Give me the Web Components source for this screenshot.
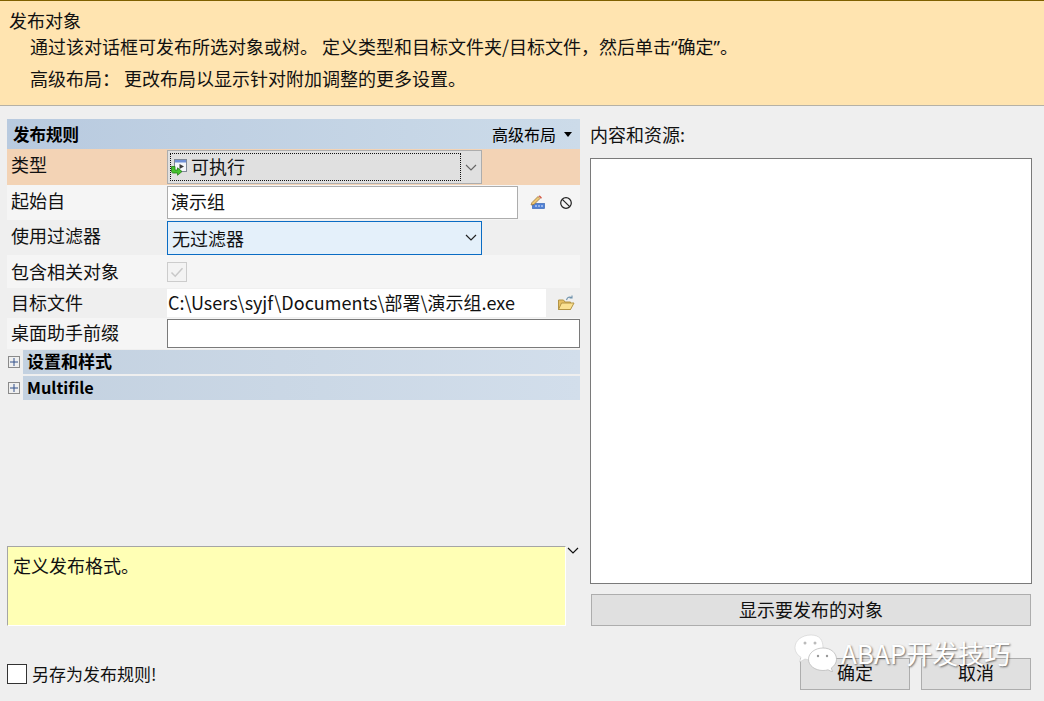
<!DOCTYPE html>
<html lang="zh">
<head>
<meta charset="utf-8">
<title>发布对象</title>
<style>
  html, body { margin: 0; height: 100%; }
  body {
    width: 1044px;
    height: 701px;
    overflow: hidden;
    position: relative;
    background: #efefef;
    color: #000;
    font-family: "Noto Sans CJK SC", "Noto Sans", sans-serif;
  }
  .page { display: grid; grid-template-columns: 573px 442px; column-gap: 10px; padding: 13px 0 0 7px; }
  .left { display: flex; flex-direction: column; height: 507px; }
  .q { font-family: "Noto Sans", sans-serif; }
</style>
</head>
<body>

<pub-banner heading="发布对象">
  <div>通过该对话框可发布所选对象或树。 定义类型和目标文件夹/目标文件，然后单击<span class="q">“</span>确定<span class="q">”</span>。</div>
  <div>高级布局： 更改布局以显示针对附加调整的更多设置。</div>
</pub-banner>

<div class="page">
  <div class="left">
    <section-head title-text="发布规则" action="高级布局"></section-head>

    <prop-row label="类型" tone="peach" h="36" lift="6">
      <combo-box variant="plain" value="可执行">
        <svg slot="icon" width="17" height="17" viewBox="0 0 17 17">
          <rect x="3.500" y="0.500" width="12" height="12" fill="#f4f6fa" stroke="#7f8896"/>
          <rect x="4" y="1" width="11" height="2.500" fill="#6f8fd6"/>
          <path d="M8.500 5l4.500 2.500L8.500 10z" fill="#3c3c3c"/>
          <path d="M0.500 7.500h3.500v3.500h2.500V8.800l4.500 3.700-4.500 3.800v-2.300H2.500C1 14 .5 13 .5 12z" fill="#45c22e" stroke="#237d17" stroke-width=".8"/>
        </svg>
      </combo-box>
    </prop-row>

    <prop-row label="起始自" tone="light" h="35" lift="6">
      <text-field value="演示组" w="351" h="33" border="#adadad"></text-field>
      <svg width="16" height="15" viewBox="0 0 16 15" style="margin-left:12px;flex:none">
        <rect x="2.500" y="8.500" width="12" height="5" fill="#4f80d6" stroke="#3a68b5" stroke-width=".7"/>
        <path d="M5 11h2M8 11h2M11 11h2" stroke="#dfe9fb"/>
        <path d="M1 10l1-2.500L8 1.500l2 2-6 6z" fill="#efc873" stroke="#8f6a33" stroke-width=".7"/>
        <path d="M8.500 1l1.300-.6 2 2-.6 1.400z" fill="#d4503c"/>
      </svg>
      <svg width="14" height="14" viewBox="0 0 14 14" style="margin-left:13px;flex:none">
        <circle cx="7" cy="7" r="5.300" fill="none" stroke="#222" stroke-width="1.200"/>
        <path d="M3.300 3.300l7.400 7.400" stroke="#222" stroke-width="1.200"/>
      </svg>
    </prop-row>

    <prop-row label="使用过滤器" tone="base" h="35" lift="6">
      <combo-box variant="focus" value="无过滤器"></combo-box>
    </prop-row>

    <prop-row label="包含相关对象" tone="light" h="33" lift="2">
      <check-mark checked disabled></check-mark>
    </prop-row>

    <prop-row label="目标文件" tone="base" h="30" lift="2">
      <text-field value="C:\Users\syjf\Documents\部署\演示组.exe" w="379" h="28" border="transparent" pad="0" drop="2"></text-field>
      <svg width="18" height="16" viewBox="0 0 18 16" style="margin-left:11px;flex:none">
        <path d="M1.500 5V14.500h12V7H8L6.500 5z" fill="#e6bf62" stroke="#b39445"/>
        <path d="M1.500 14.500l3-6.500h12.500l-3.500 6.500z" fill="#fae192" stroke="#b39445"/>
        <path d="M9.500 5c1-2.800 3-3.500 5-2.500M15 .6v2.400h-2.400" fill="none" stroke="#6f93ad" stroke-width="1.100"/>
      </svg>
    </prop-row>

    <prop-row label="桌面助手前缀" tone="light" h="31" lift="4">
      <text-field value="" w="413" h="29" border="#7a7a7a"></text-field>
    </prop-row>

    <group-row label="设置和样式" size="17" style="margin-top:1px"></group-row>
    <group-row label="Multifile" size="16.300" style="margin-top:2px"></group-row>

    <hint-box>定义发布格式。</hint-box>
  </div>

  <resource-panel label="内容和资源:" action="显示要发布的对象"></resource-panel>
</div>

<dialog-foot>
  <check-mark slot="check" live></check-mark>
  <span slot="check-label">另存为发布规则!</span>
  <flat-button slot="ok" w="110">确定</flat-button>
  <flat-button slot="cancel" w="110">取消</flat-button>
</dialog-foot>

<wechat-mark text="ABAP开发技巧"></wechat-mark>

<script>
// shared across every shadow root
const FONT = '"Noto Sans CJK SC", "Noto Sans", sans-serif';

function chevron(color) {
  return `<svg width="12" height="7" viewBox="0 0 12 7"><path d="M1 1l5 5 5-5" fill="none" stroke="${color}" stroke-width="1.200"/></svg>`;
}

class PubBanner extends HTMLElement {
  constructor() {
    super();
    this.attachShadow({ mode: 'open' });
    this.shadowRoot.innerHTML = `
      <style>
        :host { display: block; box-sizing: border-box; height: 106px; background: #ffe4b0;
                border-top: 1px solid #7f6000; border-bottom: 1px solid #b5b1a6;
                padding: 10px 0 0 9px; font: 18px/19px ${FONT}; color: #111; }
        .body { padding-left: 21px; }
        ::slotted(div) { height: 32px; line-height: 32px; }
      </style>
      <div>${this.getAttribute('heading')}</div>
      <div class="body"><slot></slot></div>`;
  }
}
customElements.define('pub-banner', PubBanner);

class SectionHead extends HTMLElement {
  constructor() {
    super();
    this.attachShadow({ mode: 'open' });
    this.shadowRoot.innerHTML = `
      <style>
        :host { display: flex; align-items: center; justify-content: space-between; height: 30px;
                background: linear-gradient(90deg, #b8cadf, #ccdbe9); padding: 0 8px 0 6px;
                font: 16px/30px ${FONT}; }
        b { font-size: 16.500px; }
        span { display: flex; align-items: center; gap: 8px; }
        i { width: 0; height: 0; border: 4.500px solid transparent; border-top: 5px solid #000; border-bottom: 0; }
      </style>
      <b>${this.getAttribute('title-text')}</b>
      <span>${this.getAttribute('action')}<i></i></span>`;
  }
}
customElements.define('section-head', SectionHead);

class PropRow extends HTMLElement {
  constructor() {
    super();
    this.attachShadow({ mode: 'open' });
    const tones = { peach: '#f3d3b5', light: '#f5f5f5', base: '#efefef' };
    this.shadowRoot.innerHTML = `
      <style>
        :host { display: grid; grid-template-columns: 160px 1fr; align-items: center;
                height: ${this.getAttribute('h')}px;
                background: ${tones[this.getAttribute('tone')]}; font: 18px/1 ${FONT}; color: #111; }
        .label { padding: 0 0 ${this.getAttribute('lift')}px 4px; }
        .value { display: flex; align-items: center; }
      </style>
      <div class="label">${this.getAttribute('label')}</div>
      <div class="value"><slot></slot></div>`;
  }
}
customElements.define('prop-row', PropRow);

class ComboBox extends HTMLElement {
  constructor() {
    super();
    this.attachShadow({ mode: 'open' });
    const focus = this.getAttribute('variant') === 'focus';
    this.shadowRoot.innerHTML = `
      <style>
        :host { display: flex; box-sizing: border-box; width: 315px; height: 34px; align-items: center;
                background: ${focus ? '#e4f0fa' : '#e0e0e0'};
                border: 1px solid ${focus ? '#0a6cc4' : '#adadad'}; font: 18px/1 ${FONT}; color: #111; }
        .face { flex: 1; display: flex; align-items: center; gap: 3px; box-sizing: border-box; height: 100%; padding-left: 4px; }
        .dotted { height: 28px; margin: 2px 0 2px 2px; padding-left: 0; border: 1px dotted #111; }
        .dotted span { padding-bottom: 2px; }
        .arrow { width: 20px; display: flex; justify-content: center; }
      </style>
      <div class="face ${focus ? '' : 'dotted'}"><slot name="icon"></slot><span>${this.getAttribute('value')}</span></div>
      <div class="arrow">${chevron(focus ? '#222' : '#666')}</div>`;
  }
}
customElements.define('combo-box', ComboBox);

class TextField extends HTMLElement {
  constructor() {
    super();
    this.attachShadow({ mode: 'open' });
    const lh = this.getAttribute('h') - 2 - (this.getAttribute('drop') || 2);
    this.shadowRoot.innerHTML = `
      <style>
        :host { display: block; box-sizing: border-box; flex: none; background: #fff;
                width: ${this.getAttribute('w')}px; height: ${this.getAttribute('h')}px;
                border: 1px solid ${this.getAttribute('border')};
                padding-left: ${this.getAttribute('pad') || 3}px;
                font: 18px/${lh}px ${FONT}; color: #111; white-space: nowrap; }
      </style>${this.getAttribute('value')}`;
  }
}
customElements.define('text-field', TextField);

class CheckMark extends HTMLElement {
  constructor() {
    super();
    this.attachShadow({ mode: 'open' });
    const live = this.hasAttribute('live');
    const mark = this.hasAttribute('checked')
      ? '<svg width="18" height="18" viewBox="0 0 18 18"><path d="M3.500 9.500l3.700 3.700 7.300-8" fill="none" stroke="#c8c8c8" stroke-width="1.500"/></svg>'
      : '';
    this.shadowRoot.innerHTML = `
      <style>
        :host { display: block; box-sizing: border-box; width: 20px; height: 20px; flex: none;
                background: ${live ? '#fff' : '#f3f3f3'}; border: 1px solid ${live ? '#333' : '#cccccc'}; }
        svg { display: block; }
      </style>${mark}`;
  }
}
customElements.define('check-mark', CheckMark);

class GroupRow extends HTMLElement {
  constructor() {
    super();
    this.attachShadow({ mode: 'open' });
    this.shadowRoot.innerHTML = `
      <style>
        :host { display: flex; align-items: center; height: 24px; font: bold ${this.getAttribute('size')}px/22px ${FONT}; }
        .box { box-sizing: border-box; width: 12px; height: 12px; margin: 0 3px 0 1px; flex: none;
               border: 1px solid #8a8a8a; background: #efefef; }
        .box svg { display: block; }
        .bar { flex: 1; height: 24px; padding-left: 4px; background: linear-gradient(90deg, #c3d1e0, #d2deeb); }
      </style>
      <div class="box"><svg width="10" height="10" viewBox="0 0 10 10"><path d="M1 5h8M5 1v8" stroke="#33508a"/></svg></div>
      <div class="bar">${this.getAttribute('label')}</div>`;
  }
}
customElements.define('group-row', GroupRow);

class HintBox extends HTMLElement {
  constructor() {
    super();
    this.attachShadow({ mode: 'open' });
    this.shadowRoot.innerHTML = `
      <style>
        :host { display: flex; margin-top: auto; height: 80px; font: 18px/1 ${FONT}; color: #111; }
        .note { box-sizing: border-box; width: 559px; background: #ffffb5;
                border-top: 1px solid #a5a5a5; border-left: 1px solid #a5a5a5;
                border-right: 1px solid #fff; border-bottom: 1px solid #fff; padding: 9px 0 0 5px; }
        .toggle { padding: 1px 0 0 1px; }
        .toggle svg { display: block; }
      </style>
      <div class="note"><slot></slot></div>
      <div class="toggle">${chevron('#111')}</div>`;
  }
}
customElements.define('hint-box', HintBox);

class FlatButton extends HTMLElement {
  constructor() {
    super();
    this.attachShadow({ mode: 'open' });
    const w = this.getAttribute('w');
    this.shadowRoot.innerHTML = `
      <style>
        :host { display: flex; align-items: center; justify-content: center; box-sizing: border-box;
                ${w ? `width:${w}px;` : ''} height: 32px; background: #e0e0e0; border: 1px solid #adadad;
                padding-bottom: ${w ? 4 : 2}px; font: 18px/1 ${FONT}; color: #111; flex: none; }
      </style><slot></slot>`;
  }
}
customElements.define('flat-button', FlatButton);

class ResourcePanel extends HTMLElement {
  constructor() {
    super();
    this.attachShadow({ mode: 'open' });
    this.shadowRoot.innerHTML = `
      <style>
        :host { display: flex; flex-direction: column; height: 507px; font: 18px/1 ${FONT}; color: #111; }
        .label { height: 39px; line-height: 30px; }
        .box { box-sizing: border-box; height: 426px; background: #fff; border: 1px solid #7a7a7a; }
        flat-button { margin: 10px 1px 0 1px; }
      </style>
      <div class="label">${this.getAttribute('label')}</div>
      <div class="box"></div>
      <flat-button>${this.getAttribute('action')}</flat-button>`;
  }
}
customElements.define('resource-panel', ResourcePanel);

class DialogFoot extends HTMLElement {
  constructor() {
    super();
    this.attachShadow({ mode: 'open' });
    this.shadowRoot.innerHTML = `
      <style>
        :host { display: flex; align-items: flex-start; box-sizing: border-box; padding: 32px 13px 0 7px; font: 17px/20px ${FONT}; color: #111; }
        .save { display: flex; align-items: center; gap: 5px; margin: 6px auto 0 0; }
        .btns { display: flex; gap: 11px; }
      </style>
      <div class="save"><slot name="check"></slot><slot name="check-label"></slot></div>
      <div class="btns"><slot name="ok"></slot><slot name="cancel"></slot></div>`;
  }
}
customElements.define('dialog-foot', DialogFoot);

// watermark sits over the dialog's buttons
class WechatMark extends HTMLElement {
  constructor() {
    super();
    this.attachShadow({ mode: 'open' });
    this.shadowRoot.innerHTML = `
      <style>
        :host { position: absolute; left: 794px; top: 634px; display: flex; align-items: center; gap: 1px; pointer-events: none; }
        span { font: 26px/1 ${FONT}; color: #fff; text-shadow: 1px 1px 2px rgba(0,0,0,.55); white-space: nowrap; }
      </style>
      <svg width="46" height="38" viewBox="0 0 46 38">
        <path d="M17 1C8 1 1 6.500 1 13.500c0 4 2.300 7.500 6 9.800L5.500 28l5.500-3c2 .6 4 .9 6 .9 8.800 0 12-6.500 12-12.400C29 6.500 26 1 17 1z" fill="#fff" stroke="#cfcfcf" stroke-width=".6"/>
        <path d="M29 14c-8 0-14.500 5-14.500 11.300S21 36.500 29 36.500c1.800 0 3.500-.3 5-.7l4.500 2.200-1.200-4c3.200-2.200 5.200-5.200 5.200-8.700C42.500 19 37 14 29 14z" fill="#fff" stroke="#b5b5b5" stroke-width=".7"/>
        <circle cx="11" cy="9" r="1.500" fill="#bbb"/><circle cx="21" cy="9" r="1.500" fill="#bbb"/>
        <circle cx="24" cy="22" r="1.200" fill="#999"/><circle cx="33" cy="22" r="1.200" fill="#999"/>
      </svg>
      <span>${this.getAttribute('text')}</span>`;
  }
}
customElements.define('wechat-mark', WechatMark);
</script>
</body>
</html>
